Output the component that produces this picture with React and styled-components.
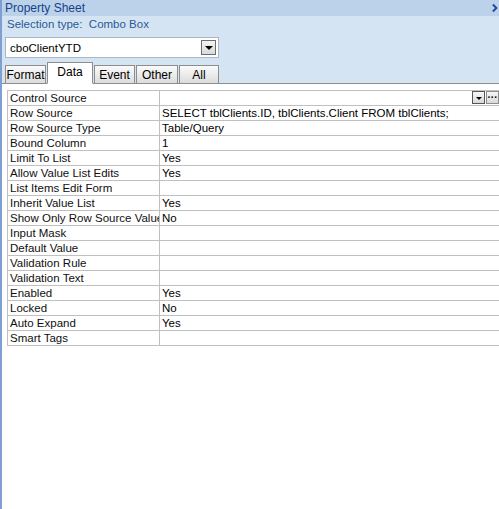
import React from 'react'
import styled, { createGlobalStyle } from 'styled-components'

const Global = createGlobalStyle`
  html, body { margin: 0; padding: 0; background: #ffffff; }
  body { font-family: "Liberation Sans", Arial, sans-serif; }
`

const tabs = [
  { name: 'Format', w: 41 },
  { name: 'Data', w: 46 },
  { name: 'Event', w: 41 },
  { name: 'Other', w: 42 },
  { name: 'All', w: 40 },
]

const rows = [
  ['Control Source', ''],
  ['Row Source', 'SELECT tblClients.ID, tblClients.Client FROM tblClients;'],
  ['Row Source Type', 'Table/Query'],
  ['Bound Column', '1'],
  ['Limit To List', 'Yes'],
  ['Allow Value List Edits', 'Yes'],
  ['List Items Edit Form', ''],
  ['Inherit Value List', 'Yes'],
  ['Show Only Row Source Values', 'No'],
  ['Input Mask', ''],
  ['Default Value', ''],
  ['Validation Rule', ''],
  ['Validation Text', ''],
  ['Enabled', 'Yes'],
  ['Locked', 'No'],
  ['Auto Expand', 'Yes'],
  ['Smart Tags', ''],
]

export default function App() {
  return (
    <>
      <Global />
      <Frame>
        <TitleBar>
          <span>Property Sheet</span>
          <Close>
            <svg width="8" height="10" viewBox="0 0 8 10">
              <path d="M1 1 L5 5 L1 9" stroke="#1c4a9c" strokeWidth="2.2" fill="none" />
            </svg>
          </Close>
        </TitleBar>
        <Header>
          <SelectionType>Selection type:&nbsp; Combo Box</SelectionType>
          <Combo>
            <ComboText>cboClientYTD</ComboText>
            <ComboButton>
              <Arrow />
            </ComboButton>
          </Combo>
          <TabStrip>
            {tabs.map((t) => (
              <Tab key={t.name} $active={t.name === 'Data'} $w={t.w}>
                {t.name}
              </Tab>
            ))}
          </TabStrip>
        </Header>
        <Body>
          <Grid>
            {rows.map(([label, value], i) => (
              <Row key={label}>
                <Label>{label}</Label>
                <Value>
                  <span>{value}</span>
                  {i === 0 && (
                    <Buttons>
                      <SmallBtn $pressed>
                        <Arrow $small />
                      </SmallBtn>
                      <SmallBtn>···</SmallBtn>
                    </Buttons>
                  )}
                </Value>
              </Row>
            ))}
          </Grid>
        </Body>
      </Frame>
    </>
  )
}

const Frame = styled.div`
  width: 499px;
  height: 509px;
  overflow: hidden;
  box-sizing: border-box;
  border-left: 2px solid #7f9fd2;
  display: flex;
  flex-direction: column;
  background: #ffffff;
`

const TitleBar = styled.div`
  height: 16px;
  flex: none;
  background: #bbd2ea;
  color: #15428b;
  font-size: 12px;
  line-height: 16px;
  padding-left: 3px;
  display: flex;
  justify-content: space-between;
  align-items: center;
`

const Close = styled.div`
  width: 7px;
  height: 16px;
  display: flex;
  align-items: center;
  overflow: hidden;
`

const Header = styled.div`
  background: #d5e4f2;
  border-bottom: 1px solid #8d8d8d;
  display: flex;
  flex-direction: column;
  padding-left: 3px;
`

const SelectionType = styled.div`
  height: 17px;
  line-height: 17px;
  font-size: 11.5px;
  color: #2a5a96;
  padding-left: 2px;
`

const Combo = styled.div`
  margin-top: 4px;
  width: 214px;
  height: 21px;
  box-sizing: border-box;
  background: #ffffff;
  border: 1px solid #a8b7c9;
  display: flex;
  align-items: center;
  justify-content: space-between;
  padding: 0 2px 0 4px;
`

const ComboText = styled.span`
  font-size: 11.5px;
  color: #000000;
`

const ComboButton = styled.div`
  width: 15px;
  height: 15px;
  box-sizing: border-box;
  border: 1px solid #6d6d6d;
  background: linear-gradient(#f4f4f4, #d9d9d9);
  display: flex;
  align-items: center;
  justify-content: center;
`

const Arrow = styled.span`
  width: 0;
  height: 0;
  border-left: ${(p) => (p.$small ? 3 : 4)}px solid transparent;
  border-right: ${(p) => (p.$small ? 3 : 4)}px solid transparent;
  border-top: ${(p) => (p.$small ? 3 : 4)}px solid #000000;
  margin-top: ${(p) => (p.$small ? 5 : 1)}px;
`

const TabStrip = styled.div`
  margin-top: 4px;
  height: 22px;
  display: flex;
  align-items: flex-end;
  gap: 1px;
  margin-bottom: -1px;
`

const Tab = styled.div`
  width: ${(p) => p.$w}px;
  height: ${(p) => (p.$active ? 22 : 19)}px;
  box-sizing: border-box;
  border: 1px solid #8d8d8d;
  border-bottom: ${(p) => (p.$active ? '1px solid #ffffff' : '1px solid #8d8d8d')};
  background: ${(p) => (p.$active ? '#ffffff' : 'linear-gradient(#fbfbfb, #dcdcdc)')};
  font-size: 12px;
  color: #000000;
  display: flex;
  align-items: ${(p) => (p.$active ? 'flex-start' : 'center')};
  padding-top: ${(p) => (p.$active ? 2 : 1)}px;
  justify-content: center;
  position: relative;
  z-index: ${(p) => (p.$active ? 1 : 0)};
`

const Body = styled.div`
  flex: 1;
  background: #ffffff;
  padding: 6px 0 0 5px;
`

const Grid = styled.div`
  border-top: 1px solid #c0c0c0;
  border-left: 1px solid #c0c0c0;
`

const Row = styled.div`
  display: grid;
  grid-template-columns: 152px 1fr;
  height: 15px;
  box-sizing: border-box;
  border-bottom: 1px solid #c0c0c0;
  font-size: 11.5px;
  line-height: 15px;
`

const Label = styled.div`
  padding-left: 2px;
  border-right: 1px solid #c0c0c0;
  white-space: nowrap;
  overflow: hidden;
  color: #101010;
`

const Value = styled.div`
  padding-left: 2px;
  display: flex;
  justify-content: space-between;
  white-space: nowrap;
  overflow: hidden;
  color: #000000;
`

const Buttons = styled.div`
  display: flex;
  gap: 1px;
  height: 14px;
`

const SmallBtn = styled.div`
  width: 13px;
  height: 13px;
  box-sizing: border-box;
  border: 1px solid ${(p) => (p.$pressed ? '#555555' : '#8d8d8d')};
  background: linear-gradient(#f6f6f6, #dadada);
  font-size: 10px;
  line-height: 8px;
  font-weight: bold;
  display: flex;
  justify-content: center;
  align-items: ${(p) => (p.$pressed ? 'flex-start' : 'center')};
`
